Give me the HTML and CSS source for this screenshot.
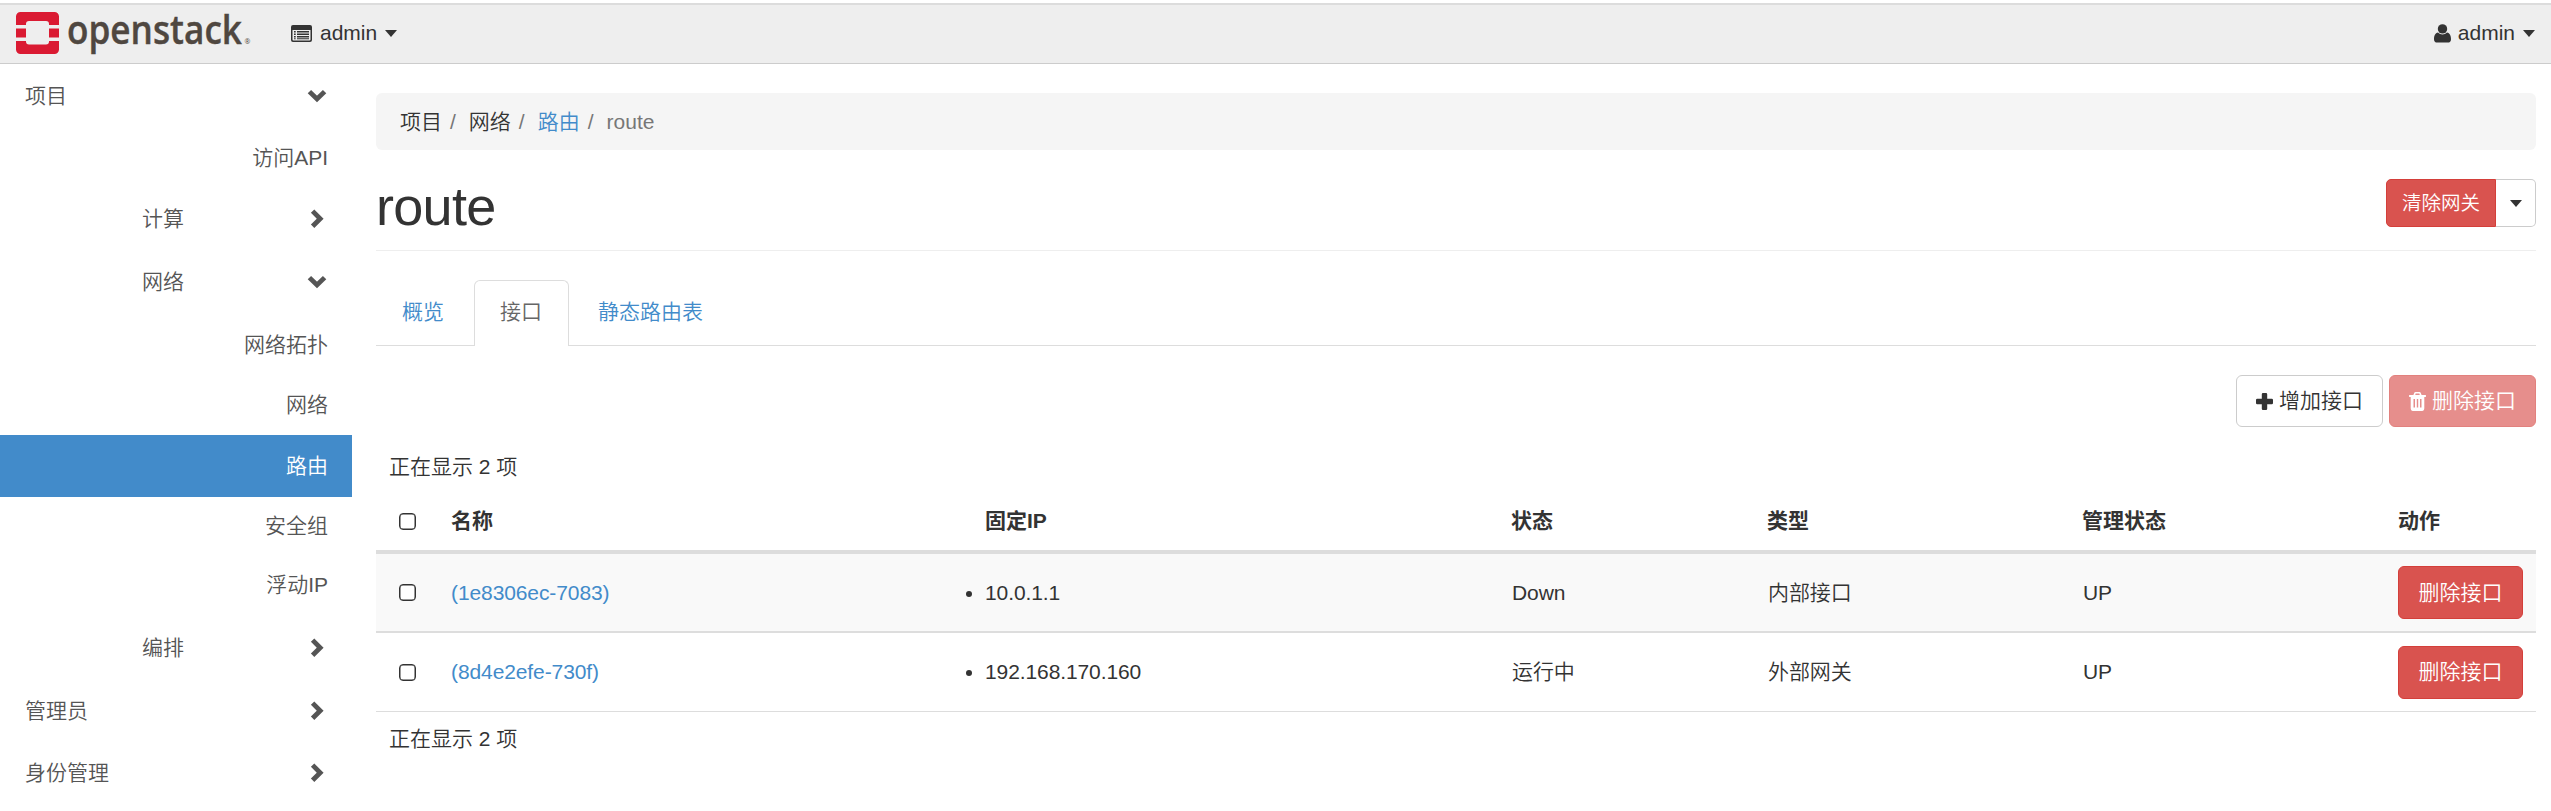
FILE: index.html
```html
<!DOCTYPE html>
<html lang="zh-CN">
<head>
<meta charset="utf-8">
<title>route - OpenStack Dashboard</title>
<link rel="stylesheet" href="styles.css">
</head>
<body>
<svg class="defs" aria-hidden="true">
  <symbol id="chev-down" viewBox="0 0 20 14"><path d="M2.400 2.600 10 10 17.600 2.600" fill="none" stroke="currentColor" stroke-width="4.800"/></symbol>
  <symbol id="chev-right" viewBox="0 0 14 20"><path d="M2.600 2.100 10.200 9.700 2.600 17.300" fill="none" stroke="currentColor" stroke-width="4.800"/></symbol>
</svg>
<header class="navbar">
  <a class="brand">
    <svg width="240" height="58" viewBox="0 0 240 58" role="img">
      <g fill="#da1a32">
        <path d="M4.500 7h34a4.500 4.500 0 0 1 4.500 4.500V20H33v-1a3 3 0 0 0-3-3H13a3 3 0 0 0-3 3v1H0V11.500A4.500 4.500 0 0 1 4.500 7z"/>
        <path d="M0 23.500h10v9H0zM33 23.500h10v9H33z"/>
        <path d="M0 36h10v.500a3 3 0 0 0 3 3h17a3 3 0 0 0 3-3V36h10v8.500a4.500 4.500 0 0 1-4.500 4.500h-34A4.500 4.500 0 0 1 0 44.500z"/>
      </g>
      <text class="wordmark" x="51" y="39" textLength="175" lengthAdjust="spacingAndGlyphs">openstack</text>
      <text class="reg" x="228.500" y="39">®</text>
    </svg>
  </a>
  <div class="switcher">
    <svg width="21" height="17" viewBox="0 0 21 17"><path fill="#333" fill-rule="evenodd" d="M2 0h17a2 2 0 0 1 2 2v13a2 2 0 0 1-2 2H2a2 2 0 0 1-2-2V2a2 2 0 0 1 2-2zM1.500 5v9.500a1 1 0 0 0 1 1h16a1 1 0 0 0 1-1V5z"/><path fill="#333" d="M3 6h1.700v1.400H3zM6 6h12v1.400H6zM3 8.500h1.700v1.400H3zM6 8.500h12v1.400H6zM3 11h1.700v1.400H3zM6 11h12v1.400H6zM3 13.200h1.700v1H3zM6 13.200h12v1H6z"/></svg>
    <span>admin</span><i class="caret"></i>
  </div>
  <div class="user">
    <svg width="17" height="19" viewBox="0 0 17 19"><path fill="#333" d="M4 8.500C1.200 9 0 11.700 0 15.200 0 17.300 1.300 18.600 3.200 18.600h10.600c1.900 0 3.200-1.300 3.200-3.400 0-3.500-1.200-6.200-4-6.700-1.200 1.300-2.800 2-4.500 2s-3.300-.7-4.500-2z"/><circle cx="8.500" cy="4.900" r="4.700" fill="#333"/></svg>
    <span>admin</span><i class="caret"></i>
  </div>
</header>
<div class="shell">
  <nav class="sidebar">
    <a class="item h63">项目<svg class="down"><use href="#chev-down"/></svg></a>
    <a class="item leaf h61">访问API</a>
    <a class="item sub h62">计算<svg class="right"><use href="#chev-right"/></svg></a>
    <a class="item sub h64">网络<svg class="down"><use href="#chev-down"/></svg></a>
    <a class="item leaf h61">网络拓扑</a>
    <a class="item leaf h60">网络</a>
    <a class="item leaf h62 active">路由</a>
    <a class="item leaf h57">安全组</a>
    <a class="item leaf h61">浮动IP</a>
    <a class="item sub h65">编排<svg class="right"><use href="#chev-right"/></svg></a>
    <a class="item h61">管理员<svg class="right"><use href="#chev-right"/></svg></a>
    <a class="item h64">身份管理<svg class="right"><use href="#chev-right"/></svg></a>
  </nav>
  <main class="content">
    <ol class="breadcrumb">
      <li>项目</li><li>网络</li><li><a>路由</a></li><li class="current">route</li>
    </ol>
    <div class="page-header">
      <h1>route</h1>
      <div class="btn-group"><button class="btn-main">清除网关</button><button class="btn-toggle"><i class="caret small"></i></button></div>
    </div>
    <ul class="tabs">
      <li>概览</li><li class="selected">接口</li><li>静态路由表</li>
    </ul>
    <div class="actions">
      <button class="btn default"><svg width="17" height="17" viewBox="0 0 17 17"><path fill="#333" d="M7 0h3a1.200 1.200 0 0 1 1.200 1.200v4.600h4.600A1.200 1.200 0 0 1 17 7v3a1.200 1.200 0 0 1-1.200 1.200h-4.600v4.600A1.200 1.200 0 0 1 10 17H7a1.200 1.200 0 0 1-1.200-1.200v-4.600H1.200A1.200 1.200 0 0 1 0 10V7a1.200 1.200 0 0 1 1.200-1.200h4.600V1.200A1.200 1.200 0 0 1 7 0z"/></svg>增加接口</button>
      <button class="btn danger disabled"><svg width="17" height="19" viewBox="0 0 17 19"><path fill="#fff" fill-rule="evenodd" d="M6.500 0h4c.6 0 1.100.4 1.300.9l.8 2.100H16.500c.3 0 .5.200.5.500v1c0 .3-.2.500-.5.500H15.300v11.200c0 1.500-.9 2.800-2.100 2.800H3.800c-1.200 0-2.100-1.200-2.100-2.700V5H.500C.2 5 0 4.800 0 4.500v-1C0 3.200.2 3 .5 3h3.900L5.200.9C5.400.4 5.900 0 6.500 0zM6.200 3h4.600l-.5-1.400H6.700zM4.500 7v8.500H6V7zm3.300 0v8.500h1.400V7zM11 7v8.500h1.500V7z"/></svg>删除接口</button>
    </div>
    <div class="summary">正在显示 2 项</div>
    <table class="grid">
      <colgroup><col class="c1"><col class="c2"><col class="c3"><col class="c4"><col class="c5"><col class="c6"><col class="c7"></colgroup>
      <thead><tr><th><input type="checkbox"></th><th>名称</th><th>固定IP</th><th>状态</th><th>类型</th><th>管理状态</th><th>动作</th></tr></thead>
      <tbody>
        <tr class="odd"><td><input type="checkbox"></td><td><a>(1e8306ec-7083)</a></td><td><ul><li>10.0.1.1</li></ul></td><td>Down</td><td>内部接口</td><td>UP</td><td><button class="btn danger row-btn">删除接口</button></td></tr>
        <tr class="even"><td><input type="checkbox"></td><td><a>(8d4e2efe-730f)</a></td><td><ul><li>192.168.170.160</li></ul></td><td>运行中</td><td>外部网关</td><td>UP</td><td><button class="btn danger row-btn">删除接口</button></td></tr>
      </tbody>
    </table>
    <div class="summary foot">正在显示 2 项</div>
  </main>
</div>
</body>
</html>
```
FILE: styles.css
```css
* { box-sizing: border-box; }
body {
  margin: 0;
  padding-top: 3px;
  background: #fff;
  color: #333;
  font: 350 21px/30px "Liberation Sans", "Noto Sans CJK SC", sans-serif;
  overflow: hidden;
}
ul, ol { margin: 0; padding: 0; list-style: none; }
a { color: #428bca; text-decoration: none; }
button { font: inherit; margin: 0; }
.defs { position: absolute; width: 0; height: 0; }

.navbar {
  display: flex;
  align-items: center;
  height: 61px;
  padding: 0 16px;
  background: #eee;
  border-top: 2px solid #dcdcdc;
  border-bottom: 1px solid #ccc;
}
.brand { display: flex; width: 275px; }
.brand svg { overflow: visible; }
.wordmark { font: 600 40px "Open Sans", sans-serif; fill: #4f4740; stroke: #4f4740; stroke-width: .4px; }
.reg { font: 7px "Open Sans", sans-serif; fill: #4f4740; }
.switcher, .user { display: flex; align-items: center; padding-bottom: 2px; }
.switcher svg { margin-right: 8px; }
.user { margin-left: auto; }
.user svg { margin-right: 7px; }
.caret {
  margin-left: 8px;
  border-top: 7px solid #333;
  border-left: 6px solid transparent;
  border-right: 6px solid transparent;
}
.caret.small { display: block; margin: 0; }

.shell { display: flex; }
.sidebar { flex: none; width: 352px; }
.item {
  display: flex;
  align-items: center;
  justify-content: space-between;
  padding: 0 24px 0 25px;
  color: #555;
}
.item.sub { padding-left: 142px; }
.item.leaf { justify-content: flex-end; }
.item.active { background: #428bca; color: #fff; }
.down { width: 20px; height: 14px; margin-right: 1px; }
.right { width: 14px; height: 20px; margin-right: 4px; }
.h57 { height: 57px; }
.h60 { height: 60px; }
.h61 { height: 61px; }
.h62 { height: 62px; }
.h63 { height: 63px; }
.h64 { height: 64px; }
.h65 { height: 65px; }

.content { flex: 1; padding: 29px 15px 0 24px; }
.breadcrumb {
  display: flex;
  align-items: center;
  height: 57px;
  padding: 0 24px;
  background: #f5f5f5;
  border-radius: 6px;
}
.breadcrumb li + li::before { content: "/"; padding: 0 13px 0 8px; color: #777; }
.breadcrumb .current { color: #777; }
.page-header {
  display: flex;
  justify-content: space-between;
  height: 101px;
  border-bottom: 1px solid #eee;
}
h1 { margin: 26px 0 0; font-size: 54px; font-weight: 400; line-height: 60px; letter-spacing: -.7px; }
.btn-group { display: flex; height: 48px; margin-top: 29px; }
.btn-main {
  width: 110px;
  padding: 0;
  color: #fff;
  font-size: 19.5px;
  background: #d9534f;
  border: 1px solid #d43f3a;
  border-radius: 5px 0 0 5px;
}
.btn-toggle {
  display: flex;
  align-items: center;
  justify-content: center;
  width: 40px;
  padding: 0;
  background: #fff;
  border: 1px solid #ccc;
  border-left: 0;
  border-radius: 0 5px 5px 0;
}
.tabs {
  display: flex;
  gap: 3px;
  height: 66px;
  margin-top: 29px;
  border-bottom: 1px solid #ddd;
  color: #428bca;
}
.tabs li {
  height: 66px;
  padding: 16px 25px 0;
  border: 1px solid transparent;
  border-bottom: 0;
  border-radius: 6px 6px 0 0;
}
.tabs li:not(:last-child) { width: 95px; }
.tabs .selected { color: #666; background: #fff; border-color: #ddd; }
.actions { display: flex; justify-content: flex-end; gap: 6px; margin-top: 29px; }
.btn {
  display: flex;
  align-items: center;
  justify-content: center;
  gap: 6px;
  width: 147px;
  height: 52px;
  padding: 0;
  border-radius: 6px;
}
.default { color: #333; background: #fff; border: 1px solid #ccc; }
.danger { color: #fff; background: #d9534f; border: 1px solid #d43f3a; }
.disabled { opacity: .65; }
.summary { height: 65px; padding: 25px 13px 0; }

.grid { width: 2160px; table-layout: fixed; border-collapse: separate; border-spacing: 0; }
.c1 { width: 63px; }
.c2 { width: 534px; }
.c3 { width: 526px; }
.c4 { width: 256px; }
.c5 { width: 315px; }
.c6 { width: 316px; }
.c7 { width: 150px; }
th, td { padding: 0 12px; text-align: left; vertical-align: middle; }
td { letter-spacing: -.1px; }
td:nth-child(n+4):nth-child(-n+6) { padding-left: 13px; }
th { height: 62px; border-bottom: 4px solid #ddd; }
.odd td { height: 79px; background: #f9f9f9; border-bottom: 2px solid #ddd; }
.even td { height: 79px; border-bottom: 1px solid #ddd; }
td li { position: relative; }
td li::before {
  content: "";
  position: absolute;
  left: -19px;
  top: 13px;
  width: 6px;
  height: 6px;
  border-radius: 50%;
  background: #333;
}
.row-btn { width: 125px; height: 53px; }
input {
  display: block;
  appearance: none;
  width: 17px;
  height: 17px;
  margin: 0 0 0 11px;
  border: 1px solid #333;
  border-radius: 4px;
  background: #fff;
  box-shadow: inset 0 0 0 .5px #333;
}
.foot { padding-top: 12px; }
```
